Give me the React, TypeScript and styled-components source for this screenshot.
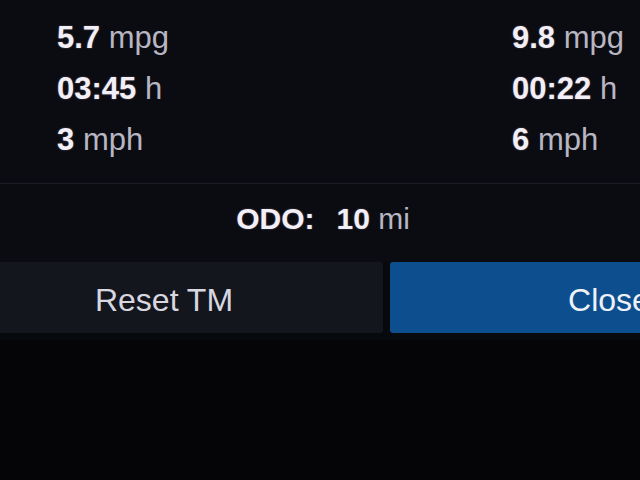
import styled, { createGlobalStyle } from 'styled-components'

const GlobalStyle = createGlobalStyle`
  html,
  body {
    margin: 0;
    padding: 0;
    background: #050508;
    overflow: hidden;
  }

  body {
    font-family: 'Liberation Sans', Arial, sans-serif;
  }
`

const Viewport = styled.div`
  width: 640px;
  height: 480px;
  overflow: hidden;
  background: #050508;
`

// the head unit screen is wider than the photo, so it is shifted left
const Screen = styled.div`
  width: 883px;
  margin-left: -55px;
  background: #0b0c12;
`

const Stats = styled.section`
  display: grid;
  grid-template-columns: 455px 1fr;
  padding: 12px 0 18px 112px;
  border-bottom: 1px solid #1b1d25;
`

const Column = styled.div`
  display: grid;
  grid-auto-rows: 51px;
  align-items: center;
`

const Value = styled.div`
  font-size: 31px;
  line-height: 1;
  white-space: nowrap;
`

const Num = styled.span`
  font-weight: 700;
  color: #f3eff7;
  text-shadow: 0 0 2px rgba(255, 220, 255, 0.35);
`

const Unit = styled.span`
  font-weight: 400;
  color: #b8b6c3;
`

const Odo = styled.div`
  display: flex;
  justify-content: center;
  align-items: center;
  gap: 22px;
  height: 70px;
  padding: 0 243px 8px 116px;
  font-size: 30px;
`

const Buttons = styled.div`
  display: grid;
  grid-template-columns: 438px 438px;
  gap: 7px;
  padding-bottom: 7px;
  background: #08090d;
`

const Button = styled.div<{ $primary?: boolean }>`
  display: flex;
  align-items: center;
  justify-content: center;
  height: 71px;
  padding-top: 6px;
  box-sizing: border-box;
  border-radius: 3px;
  font-size: 32px;
  color: ${(p) => (p.$primary ? '#eef1f8' : '#d8d7e0')};
  background: ${(p) => (p.$primary ? '#0d4e8e' : '#14161d')};
`

const left = [
  { num: '5.7', unit: 'mpg' },
  { num: '03:45', unit: 'h' },
  { num: '3', unit: 'mph' },
]

const right = [
  { num: '9.8', unit: 'mpg' },
  { num: '00:22', unit: 'h' },
  { num: '6', unit: 'mph' },
]

const StatColumn = ({ items }: { items: { num: string; unit: string }[] }) => (
  <Column>
    {items.map((it) => (
      <Value key={it.num}>
        <Num>{it.num}</Num> <Unit>{it.unit}</Unit>
      </Value>
    ))}
  </Column>
)

export default function App() {
  return (
    <Viewport>
      <GlobalStyle />
      <Screen>
        <Stats>
          <StatColumn items={left} />
          <StatColumn items={right} />
        </Stats>
        <Odo>
          <Num>ODO:</Num>
          <span>
            <Num>10</Num> <Unit>mi</Unit>
          </span>
        </Odo>
        <Buttons>
          <Button>Reset TM</Button>
          <Button $primary>Close</Button>
        </Buttons>
      </Screen>
    </Viewport>
  )
}
